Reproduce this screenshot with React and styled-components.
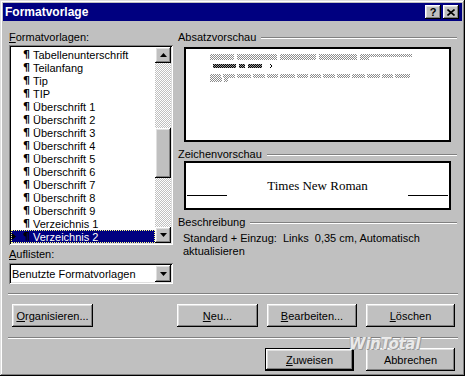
import React from "react";
import styled, { createGlobalStyle } from "styled-components";

const GlobalStyle = createGlobalStyle`
  html, body {
    margin: 0;
    padding: 0;
    background: #c0c0c0;
  }
  body {
    font-family: "Liberation Sans", Arial, sans-serif;
    font-size: 11px;
    color: #000;
  }
`;

const raised = `
  background: #c0c0c0;
  box-shadow: inset -1px -1px #000, inset 1px 1px #fff, inset -2px -2px #808080, inset 2px 2px #dfdfdf;
`;

const sunken = `
  box-shadow: inset 1px 1px #808080, inset -1px -1px #fff, inset 2px 2px #000, inset -2px -2px #dfdfdf;
`;

const Window = styled.div`
  position: relative;
  width: 465px;
  height: 376px;
  box-sizing: border-box;
  padding: 3px;
  background: #c0c0c0;
  box-shadow: inset -1px -1px #000, inset 1px 1px #dfdfdf, inset -2px -2px #808080, inset 2px 2px #fff;
  display: flex;
  flex-direction: column;
  overflow: hidden;
`;

const TitleBar = styled.div`
  height: 18px;
  flex: none;
  background: #000080;
  display: flex;
  align-items: center;
  justify-content: space-between;
  padding: 0 3px 0 2px;
`;

const Title = styled.span`
  color: #fff;
  font-weight: bold;
  font-size: 12px;
`;

const CaptionButtons = styled.div`
  display: flex;
  gap: 2px;
`;

const CaptionButton = styled.div`
  ${raised}
  width: 16px;
  height: 14px;
  display: flex;
  align-items: center;
  justify-content: center;
  font-weight: bold;
  font-size: 11px;
  line-height: 14px;
`;

const Body = styled.div`
  padding: 10px 5px 0 6px;
  display: flex;
  flex-direction: column;
`;

const Main = styled.div`
  display: grid;
  grid-template-columns: 164px 1fr;
  column-gap: 5px;
`;

const Column = styled.div`
  display: flex;
  flex-direction: column;
`;

const Label = styled.div`
  line-height: 13px;
  height: 13px;
  margin-top: ${(p) => p.$top || 0}px;
`;

const U = styled.span`
  text-decoration: underline;
  text-underline-offset: 1px;
`;

const ListBox = styled.div`
  ${sunken}
  background: #fff;
  margin-top: 1px;
  height: 200px;
  box-sizing: border-box;
  padding: 2px;
  display: flex;
`;

const Items = styled.div`
  flex: 1;
  display: flex;
  flex-direction: column;
  overflow: hidden;
  padding-top: 1px;
`;

const Row = styled.div`
  height: 13px;
  flex: none;
  display: flex;
  align-items: center;
  box-sizing: border-box;
  padding-left: 1px;
  white-space: nowrap;
  background: ${(p) => (p.$selected ? "#000080" : "transparent")};
  color: ${(p) => (p.$selected ? "#fff" : "#000")};
  outline: ${(p) => (p.$selected ? "1px dotted #ffff80" : "none")};
  outline-offset: -1px;
`;

const Pointer = styled.span`
  width: 11px;
  flex: none;
  display: flex;
  align-items: center;
`;

const Pilcrow = styled.span`
  width: 10px;
  flex: none;
  font-family: "DejaVu Sans", sans-serif;
  font-weight: bold;
  color: #000;
  font-size: 11px;
`;

const Scrollbar = styled.div`
  width: 16px;
  flex: none;
  display: flex;
  flex-direction: column;
`;

const ArrowButton = styled.div`
  ${raised}
  width: 16px;
  height: 16px;
  flex: none;
  display: flex;
  align-items: center;
  justify-content: center;
`;

const Track = styled.div`
  flex: 1;
  background-color: #fff;
  background-image: conic-gradient(#c0c0c0 25%, #fff 0 50%, #c0c0c0 0 75%, #fff 0);
  background-size: 2px 2px;
  display: flex;
  flex-direction: column;
`;

const Thumb = styled.div`
  ${raised}
  width: 16px;
  height: ${(p) => p.$size}px;
  margin-top: ${(p) => p.$offset}px;
`;

const Combo = styled.div`
  ${sunken}
  background: #fff;
  margin-top: 2px;
  height: 21px;
  box-sizing: border-box;
  padding: 2px;
  display: flex;
  align-items: center;
`;

const ComboText = styled.span`
  flex: 1;
  padding-left: 1px;
`;

const ComboButton = styled(ArrowButton)`
  height: 17px;
`;

const GroupLabel = styled.div`
  display: flex;
  align-items: center;
  line-height: 13px;
  height: 13px;
  margin-top: ${(p) => p.$top || 0}px;
  &::after {
    content: "";
    flex: 1;
    margin-left: 5px;
    border-top: 1px solid #808080;
    border-bottom: 1px solid #fff;
  }
`;

const PreviewBox = styled.div`
  margin: ${(p) => p.$top || 0}px 6px 0 6px;
  height: ${(p) => p.$height}px;
  box-sizing: border-box;
  border: 2px solid #000;
  background: #fff;
`;

const CharPreview = styled(PreviewBox)`
  display: flex;
  align-items: center;
  justify-content: space-between;
  padding: 0 1px 0 1px;
`;

const Baseline = styled.span`
  width: 40px;
  height: 10px;
  margin-top: 10px;
  border-bottom: 1px solid #000;
`;

const SampleText = styled.span`
  font-family: "Liberation Serif", "Times New Roman", serif;
  font-size: 13px;
  margin-top: 1px;
`;

const Description = styled.div`
  margin-top: 3px;
  padding-left: 5px;
  line-height: 13px;
  white-space: pre;
`;

const Separator = styled.div`
  margin: ${(p) => p.$top}px -1px 0 -1px;
  border-top: 1px solid #808080;
  border-bottom: 1px solid #fff;
`;

const ButtonRow = styled.div`
  display: flex;
  margin-top: 9px;
  padding: 0 2px 0 3px;
  gap: ${(p) => p.$gap || 9}px;
  justify-content: ${(p) => (p.$end ? "flex-end" : "flex-start")};
`;

const Button = styled.div`
  ${raised}
  width: ${(p) => p.$w}px;
  height: 23px;
  box-sizing: border-box;
  display: flex;
  align-items: center;
  justify-content: center;
  margin-left: ${(p) => (p.$push ? "auto" : "0")};
  ${(p) =>
    p.$default &&
    `
    box-shadow: inset 0 0 0 1px #000, inset -2px -2px #000, inset 2px 2px #fff, inset -3px -3px #808080, inset 3px 3px #dfdfdf;
  `}
`;

const Watermark = styled.div`
  position: absolute;
  left: 349px;
  top: 335px;
  font-family: "DejaVu Sans", sans-serif;
  font-style: italic;
  font-weight: bold;
  font-size: 15px;
  letter-spacing: -0.3px;
  color: rgba(255, 255, 255, 0.8);
  text-shadow: 1px 1px 0 #999, -1px 0 0 #aaa;
  pointer-events: none;
`;

const styles = [
  "Tabellenunterschrift",
  "Teilanfang",
  "Tip",
  "TIP",
  "Überschrift 1",
  "Überschrift 2",
  "Überschrift 3",
  "Überschrift 4",
  "Überschrift 5",
  "Überschrift 6",
  "Überschrift 7",
  "Überschrift 8",
  "Überschrift 9",
  "Verzeichnis 1",
  "Verzeichnis 2",
];

const UpArrow = () => (
  <svg width="7" height="4" viewBox="0 0 7 4">
    <polygon points="3.5,0 7,4 0,4" fill="#000" />
  </svg>
);

const DownArrow = () => (
  <svg width="7" height="4" viewBox="0 0 7 4">
    <polygon points="0,0 7,0 3.5,4" fill="#000" />
  </svg>
);

const segs = (list, y, h, fill) =>
  list.map(([a, b], i) => (
    <rect key={`${y}-${i}`} x={a} y={y} width={b - a} height={h} fill={fill} />
  ));

function ParagraphSketch() {
  const rowC = [24, 37, 51, 67, 81, 94, 111, 124, 137, 151, 166, 181, 196, 209, 226];
  const cSegs = rowC.slice(0, -1).map((a, i) => [a, rowC[i + 1] - 2]);
  return (
    <svg width="100%" height="100%" viewBox="0 0 263 91">
      <defs>
        <pattern id="lt" width="2" height="2" patternUnits="userSpaceOnUse">
          <rect x="0" y="0" width="1" height="1" fill="#8c8c8c" />
          <rect x="1" y="1" width="1" height="1" fill="#8c8c8c" />
        </pattern>
        <pattern id="dk" width="2" height="2" patternUnits="userSpaceOnUse">
          <rect x="0" y="0" width="2" height="2" fill="#9a9a9a" />
          <rect x="0" y="0" width="1" height="1" fill="#000" />
          <rect x="1" y="1" width="1" height="1" fill="#000" />
        </pattern>
      </defs>
      {segs([[24, 48], [51, 91], [94, 130], [133, 171], [174, 226]], 5, 3, "url(#lt)")}
      {segs([[24, 48], [51, 91], [94, 130], [133, 171], [174, 183]], 8, 3, "url(#lt)")}
      {segs([[27, 50], [53, 59], [62, 76]], 15, 4, "url(#dk)")}
      <path d="M84 15 L86 17 L84 19" stroke="#000" strokeWidth="1" fill="none" />
      {segs(cSegs, 25, 4, "url(#lt)")}
      {segs([[24, 36], [38, 42]], 29, 4, "url(#lt)")}
    </svg>
  );
}

export default function App() {
  return (
    <>
      <GlobalStyle />
      <Window>
        <TitleBar>
          <Title>Formatvorlage</Title>
          <CaptionButtons>
            <CaptionButton>?</CaptionButton>
            <CaptionButton>
              <svg width="8" height="7" viewBox="0 0 8 7">
                <path d="M0.5 0.5 L7.5 6.5 M7.5 0.5 L0.5 6.5" stroke="#000" strokeWidth="1.6" />
              </svg>
            </CaptionButton>
          </CaptionButtons>
        </TitleBar>
        <Body>
          <Main>
            <Column>
              <Label>
                <U>F</U>ormatvorlagen:
              </Label>
              <ListBox>
                <Items>
                  {styles.map((name, i) => {
                    const selected = i === styles.length - 1;
                    return (
                      <Row key={name} $selected={selected}>
                        <Pointer>
                          {selected && (
                            <svg width="4" height="7" viewBox="0 0 4 7">
                              <polygon points="0,0 4,3.5 0,7" fill="#000" />
                            </svg>
                          )}
                        </Pointer>
                        <Pilcrow>¶</Pilcrow>
                        {name}
                      </Row>
                    );
                  })}
                </Items>
                <Scrollbar>
                  <ArrowButton>
                    <UpArrow />
                  </ArrowButton>
                  <Track>
                    <Thumb $offset={65} $size={50} />
                  </Track>
                  <ArrowButton>
                    <DownArrow />
                  </ArrowButton>
                </Scrollbar>
              </ListBox>
              <Label $top={3}>
                <U>A</U>uflisten:
              </Label>
              <Combo>
                <ComboText>Benutzte Formatvorlagen</ComboText>
                <ComboButton>
                  <DownArrow />
                </ComboButton>
              </Combo>
            </Column>
            <Column>
              <GroupLabel>Absatzvorschau</GroupLabel>
              <PreviewBox $top={3} $height={95}>
                <ParagraphSketch />
              </PreviewBox>
              <GroupLabel $top={6}>Zeichenvorschau</GroupLabel>
              <CharPreview $height={49}>
                <Baseline />
                <SampleText>Times New Roman</SampleText>
                <Baseline />
              </CharPreview>
              <GroupLabel $top={6}>Beschreibung</GroupLabel>
              <Description>
                {"Standard + Einzug:  Links  0,35 cm, Automatisch"}
                <br />
                aktualisieren
              </Description>
            </Column>
          </Main>
          <Separator $top={9} />
          <ButtonRow>
            <Button $w={81}>
              <U>O</U>rganisieren...
            </Button>
            <Button $w={81} $push>
              <U>N</U>eu...
            </Button>
            <Button $w={90}>
              <U>B</U>earbeiten...
            </Button>
            <Button $w={89}>
              <U>L</U>öschen
            </Button>
          </ButtonRow>
          <Separator $top={10} />
          <ButtonRow $end $gap={12}>
            <Button $w={89} $default>
              <U>Z</U>uweisen
            </Button>
            <Button $w={89}>Abbrechen</Button>
          </ButtonRow>
        </Body>
        <Watermark>WinTotal</Watermark>
      </Window>
    </>
  );
}
